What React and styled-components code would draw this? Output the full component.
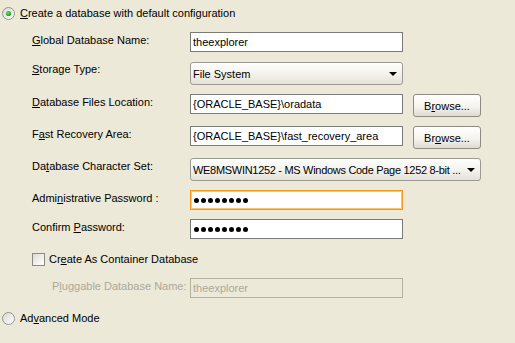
import React from "react";
import styled, { createGlobalStyle } from "styled-components";

const Global = createGlobalStyle`
  html, body { margin: 0; padding: 0; background: #ECE9D8; }
  body { font-family: "Liberation Sans", Arial, sans-serif; font-size: 11px; color: #000; }
`;

const Page = styled.div`
  width: 515px;
  height: 343px;
  background: #ECE9D8;
  display: flex;
  flex-direction: column;
  overflow: hidden;
`;

const RadioRow = styled.div`
  display: flex;
  align-items: center;
  gap: 5px;
  height: 13px;
  padding-left: 2px;
  margin-top: ${(p) => p.$mt}px;
  line-height: 13px;
`;

const Fields = styled.div`
  display: flex;
  flex-direction: column;
  padding-left: 32px;
`;

const Row = styled.div`
  display: flex;
  align-items: flex-start;
  height: ${(p) => p.$h}px;
  margin-top: ${(p) => p.$mt}px;
  padding-left: ${(p) => p.$indent || 0}px;
`;

const Label = styled.label`
  width: ${(p) => 158 - (p.$indent || 0)}px;
  flex-shrink: 0;
  line-height: ${(p) => p.$h}px;
  margin-top: ${(p) => p.$dy || -2}px;
  white-space: nowrap;
  color: ${(p) => (p.$disabled ? "#ACA899" : "#000")};
`;

const TextBox = styled.div`
  box-sizing: border-box;
  width: ${(p) => p.$w || 213}px;
  height: 20px;
  border: 1px solid ${(p) => (p.$disabled ? "#B4B19E" : "#7A7A7A")};
  background: ${(p) => (p.$disabled ? "#ECE9D8" : "#fff")};
  color: ${(p) => (p.$disabled ? "#ACA899" : "#000")};
  padding: 0 2px;
  line-height: 18px;
  white-space: nowrap;
  overflow: hidden;
  display: flex;
  align-items: center;
`;

const FocusBox = styled(TextBox)`
  border: 1px solid #F39A1E;
  box-shadow: inset 0 0 0 1px #FBC46B;
`;

const Dots = styled.div`
  display: flex;
  gap: 2px;
  padding-left: 1px;
`;

const Dot = styled.span`
  width: 5px;
  height: 5px;
  border-radius: 50%;
  background: #000;
`;

const Combo = styled.div`
  box-sizing: border-box;
  width: ${(p) => p.$w}px;
  height: 23px;
  border: 1px solid #9C9A91;
  border-radius: 3px;
  background: linear-gradient(#FEFEFD 0%, #F4F3EE 50%, #E4E1D5 100%);
  display: flex;
  align-items: center;
  padding: 0 5px 0 2px;
  white-space: nowrap;
`;

const ComboText = styled.span`
  flex: 1;
  min-width: 0;
  overflow: hidden;
  letter-spacing: ${(p) => p.$ls || 0}px;
`;

const Arrow = styled.span`
  flex-shrink: 0;
  width: 0;
  height: 0;
  border-left: 4px solid transparent;
  border-right: 4px solid transparent;
  border-top: 4px solid #000;
  margin-left: 3px;
`;

const Button = styled.div`
  box-sizing: border-box;
  width: 68px;
  height: 23px;
  margin-left: 10px;
  border: 1px solid #8E8C82;
  border-radius: 3px;
  background: linear-gradient(#FFFFFF 0%, #F5F4EF 55%, #DEDBCF 100%);
  display: flex;
  align-items: center;
  justify-content: center;
  white-space: nowrap;
`;

const Check = styled.span`
  box-sizing: border-box;
  width: 13px;
  height: 13px;
  border: 1px solid #8A8A85;
  background: linear-gradient(135deg, #DCDBD2 0%, #F3F2EC 60%, #FFFFFF 100%);
  margin-right: 4px;
  flex-shrink: 0;
`;

const CheckLabel = styled.span`
  line-height: 13px;
`;

const U = styled.span`
  text-decoration: underline;
  text-underline-offset: 1px;
`;

function Radio({ checked }) {
  const id = checked ? "rg1" : "rg2";
  return (
    <svg width="13" height="13" viewBox="0 0 13 13">
      <defs>
        <linearGradient id={id} x1="0" y1="0" x2="1" y2="1">
          <stop offset="0" stopColor="#DAD8CC" />
          <stop offset="1" stopColor="#FFFFFF" />
        </linearGradient>
        <radialGradient id="dotg" cx="0.4" cy="0.4" r="0.6">
          <stop offset="0" stopColor="#6FDB6F" />
          <stop offset="1" stopColor="#1E9A1E" />
        </radialGradient>
      </defs>
      <circle cx="6.5" cy="6.5" r="6" fill={`url(#${id})`} stroke="#8E959C" strokeWidth="1" />
      {checked && <circle cx="6.5" cy="6.5" r="2.6" fill="url(#dotg)" />}
    </svg>
  );
}

function Password() {
  return (
    <Dots>
      {Array.from({ length: 8 }).map((_, i) => (
        <Dot key={i} />
      ))}
    </Dots>
  );
}

export default function App() {
  return (
    <Page>
      <Global />
      <RadioRow $mt={7}>
        <Radio checked />
        <span>
          <U>C</U>reate a database with default configuration
        </span>
      </RadioRow>
      <Fields>
        <Row $h={20} $mt={12}>
          <Label $h={20}>
            <U>G</U>lobal Database Name:
          </Label>
          <TextBox>theexplorer</TextBox>
        </Row>
        <Row $h={23} $mt={10}>
          <Label $h={23} $dy={-4}>
            <U>S</U>torage Type:
          </Label>
          <Combo $w={213}>
            <ComboText>File System</ComboText>
            <Arrow />
          </Combo>
        </Row>
        <Row $h={23} $mt={9}>
          <Label $h={20}>
            <U>D</U>atabase Files Location:
          </Label>
          <TextBox>{"{ORACLE_BASE}\\oradata"}</TextBox>
          <Button>
            B<U>r</U>owse...
          </Button>
        </Row>
        <Row $h={23} $mt={9}>
          <Label $h={20}>
            F<U>a</U>st Recovery Area:
          </Label>
          <TextBox>{"{ORACLE_BASE}\\fast_recovery_area"}</TextBox>
          <Button>
            Br<U>o</U>wse...
          </Button>
        </Row>
        <Row $h={23} $mt={9}>
          <Label $h={23} $dy={-3}>
            Da<U>t</U>abase Character Set:
          </Label>
          <Combo $w={291}>
            <ComboText $ls={-0.3}>WE8MSWIN1252 - MS Windows Code Page 1252 8-bit ...</ComboText>
            <Arrow />
          </Combo>
        </Row>
        <Row $h={20} $mt={9}>
          <Label $h={20}>
            Admi<U>n</U>istrative Password :
          </Label>
          <FocusBox>
            <Password />
          </FocusBox>
        </Row>
        <Row $h={20} $mt={9}>
          <Label $h={20}>
            Confirm <U>P</U>assword:
          </Label>
          <TextBox>
            <Password />
          </TextBox>
        </Row>
        <Row $h={13} $mt={14}>
          <Check />
          <CheckLabel>
            Cr<U>e</U>ate As Container Database
          </CheckLabel>
        </Row>
        <Row $h={20} $mt={12} $indent={20}>
          <Label $h={20} $indent={20} $disabled>
            P<U>l</U>uggable Database Name:
          </Label>
          <TextBox $disabled>theexplorer</TextBox>
        </Row>
      </Fields>
      <RadioRow $mt={14}>
        <Radio />
        <span>
          Ad<U>v</U>anced Mode
        </span>
      </RadioRow>
    </Page>
  );
}
